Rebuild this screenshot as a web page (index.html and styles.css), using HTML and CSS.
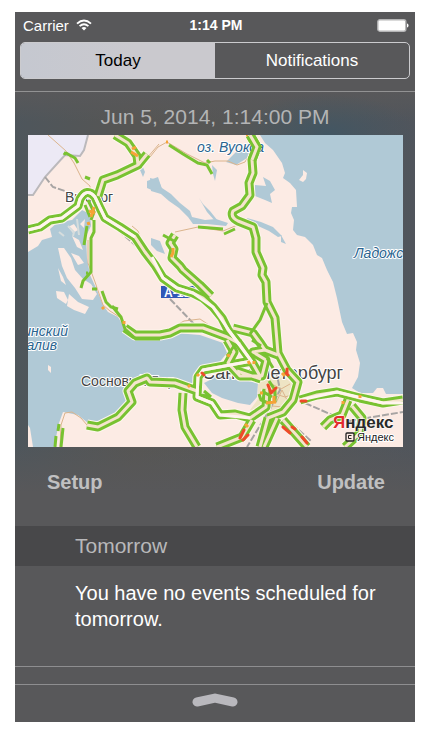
FILE: index.html
```html
<!DOCTYPE html>
<html lang="en">
<head>
<meta charset="utf-8">
<meta name="viewport" content="width=device-width, initial-scale=1">
<title>Notification Center</title>
<link rel="stylesheet" href="styles.css">
</head>
<body>
<main class="screen">
  <header class="status">
    <div class="carrier">
      <span>Carrier</span>
      <svg class="wifi" viewBox="0 0 16 12" aria-hidden="true">
        <path d="M1 4.6Q8-1.8 15 4.6M3.6 7.1Q8 3.2 12.4 7.1" fill="none" stroke="#fff" stroke-width="1.9"/>
        <path d="M5.5 9Q8 6.8 10.5 9L8 11.6Z" fill="#fff"/>
      </svg>
    </div>
    <time class="clock">1:14 PM</time>
    <svg class="battery" viewBox="0 0 32 13" aria-hidden="true">
      <rect x=".8" y=".8" width="28" height="11.4" rx="2" fill="#fff" stroke="#b5b5b6" stroke-width="1.4"/>
      <path d="M30 4.5q1.5 0 1.5 2t-1.5 2z" fill="#fff"/>
    </svg>
  </header>

  <nav class="tabs">
    <button class="tab tab-active" type="button">Today</button>
    <button class="tab" type="button">Notifications</button>
  </nav>

  <section class="widget">
    <h1 class="date">Jun 5, 2014, 1:14:00 PM</h1>
    <svg class="map" viewBox="28 135 375 312" role="img" aria-label="Traffic map">
      <rect x="28" y="135" width="375" height="312" fill="#fcebe4"/>
      <path d="M28 135H88L84 150L80 156L65 155L45 177L33 195H28Z" fill="#ece9f5"/>
      <path d="M88 135L84 150L80 156L65 155L45 177L33 195H28" class="border"/>

      <g class="water">
        <path d="M260 135L265 143L273 150L282 163L285 173L283 178L290 183L296 190L297 207L292 207L291 213L294 220L293 230L297 235L305 237L313 245L317 255L322 258L327 270L333 282L337 298L342 322L347 334L353 333L357 342L356 350L360 363L358 377L352 388L360 393H373L377 388H383L386 394H403V135Z"/>
        <path d="M28 252L38 246L42 240L52 237L50 229L58 222L72 220L82 210L90 214L91 226L86 236L87 258L90 275L97 290L103 305L108 312L118 317L124 327L128 337L163 339L176 333L200 335L223 343L227 353L218 364L202 370L196 377L193 384L183 385L160 381H140L134 386L133 397L125 415L103 425L88 423L78 415L63 412L59 423L54 447H33L30 428L28 425Z"/>
        <path d="M204 383L212 379L220 373L233 378L258 383L257 397L250 405L238 403L222 398L212 393Z"/>
        <path d="M150 178L158 180L162 188L171 194L180 203L190 211L192 217L205 220L216 219L228 223L226 226L207 224L193 224L188 217L179 208L169 201L161 194L151 191Z"/>
        <path d="M199 198L203 204L210 211L218 221L215 221L207 212Z"/>
        <path d="M255 185L266 186L263 177L270 181L275 190L270 194L272 203L265 200L255 196Z"/>
        <path d="M237 151L249 143L253 149L247 158L236 165L226 162Z"/>
        <path d="M247 218L261 222L273 227L282 236L278 237L269 231L258 226L249 223Z"/>
        <path d="M147 181L158 177L161 186L154 191L147 188Z"/>
        <path d="M142 165L145 172L143 177L140 170ZM212 165L217 170L215 181L213 174Z"/>
        <path d="M151 238L160 241L165 254L157 251L151 245ZM281 235L286 244L281 242Z"/>
      </g>
      <g class="land">
        <path d="M58 248L64 248L71 258L75 270L83 279L91 284L97 294L93 300L82 299L75 288L67 278L62 266Z"/>
        <path d="M58 268L63 277L66 285L61 281ZM56 291L64 292L68 300L66 304L57 298ZM69 294L78 302L89 307L85 314L74 310L67 306Z"/>
        <path d="M72 236L79 240L83 250L77 247ZM71 253L79 256L84 263L78 265ZM68 227L74 224L78 230L73 233ZM80 224L85 219L84 228Z"/>
        <path d="M48 365L51 367V373L48 370ZM299 180L303 175L303 170L307 173L306 179L303 182Z"/>
      </g>
      <path d="M68 226L74 232L73 236M59 232L64 236M77 219L79 235" fill="none" stroke="#d6dddd" stroke-width="2"/>
      <path d="M258 384L267 378L282 375L294 385L296 400L285 413L262 415L250 410L258 399Z" fill="#eee4c4"/>

      <g class="rail">
        <path d="M45 177L53 187L65 191L78 199M105 218L126 237L144 253M170 299L194 324M305 403L330 414L349 421L403 412M292 424L311 441M276 370L280 390L269 411L247 447"/>
      </g>
      <g class="street">
        <path d="M48 135L66 151L74 163L82 179L90 186V193M132 226L138 231L142 242"/>
        <path d="M150 157L158 147L167 142L187 154L205 163L215 161L228 161L237 165L245 162L253 148M137 165L147 158L159 144"/>
        <path d="M175 232L198 227L223 231L240 224M173 327L184 321L200 319L218 331"/>
        <path d="M60 447L61 425L65 413L72 412L81 418L87 425M88 240L88 263L95 282L103 305L110 311L121 318L125 330L135 337"/>
        <path d="M270 383L281 389L290 384M276 403L282 390L288 402M266 391L285 397L294 394M261 405L283 407"/>
      </g>

      <g class="label-dark">
        <text x="65" y="202" font-size="14">Выборг</text>
        <text x="81" y="386" font-size="14">Сосновый Бор</text>
        <text x="202" y="379" font-size="18">Санкт-Петербург</text>
      </g>
      <rect x="161" y="286" width="37" height="12" fill="#3157b7"/>
      <text x="164" y="297" class="route-no">A-181</text>

      <g class="halo">
        <g id="roads">
          <path d="M28 230L40 227L50 220L62 218L78 206L80 199Q87 187 95 197L100 208L105 218L120 227L135 237L145 252L155 265L163 278L177 288L193 293L203 298L213 307L222 318L228 330L240 345L252 362L260 376"/>
          <path d="M98 196L103 180L117 175L138 165L137 156L128 143L115 135M138 165L147 154"/>
          <path d="M250 135L257 147L252 160L253 173L249 183L250 195L242 206L233 211Q230 217 238 221L253 227L256 238L256 252L263 268L262 275L266 282L267 302L275 318L278 353L287 370L298 382L293 400L283 412L268 418"/>
          <path d="M125 328L135 335L160 335L170 333L180 328L203 328L227 337L240 344M233 328L253 333L261 344L265 350"/>
          <path d="M175 235L170 243L174 249L172 258L180 266L183 270L200 285L211 296"/>
          <path d="M252 361L230 365L203 370L198 377L197 397L212 403L220 415L235 414L250 418L266 407L267 389M197 391L175 383L150 382L147 378L135 383L128 391L132 402L118 417L98 427L87 425"/>
          <path d="M227 340L234 352L228 363L240 376L262 376L266 360L253 352L265 350L278 355M237 371L261 379"/>
          <path d="M183 393L182 410L185 427L197 447M252 420L242 437L217 447M268 418L260 447M277 418L264 447M283 420L307 447"/>
          <path d="M300 400L317 395L337 392L360 398L383 403L403 400M348 400L342 415L330 420L323 427M352 406L362 418L360 433L345 447"/>
        </g>
      </g>
      <use href="#roads" class="traffic"/>
      <use href="#roads" class="median"/>
      <path d="M152 257L163 278L177 288L193 293L213 307L230 332L252 362M28 230L40 227L50 220L62 218L78 206L80 199Q87 187 95 197L105 218L135 237M252 361L203 370L198 377L197 397L212 403L220 415L250 418M300 400L337 392L383 403H403" class="main-line"/>
      <g class="single">
        <path d="M88 200L94 212L91 220M85 205L90 217M94 220V232L91 238L91 272L83 281L81 288M87 226L84 245M86 273H88M92 289H97M102 291L106 302L111 307L118 309M66 153L75 158L78 163M85 177L90 179M64 155L66 152"/>
        <path d="M169 145L183 154L198 163L207 165L212 174M207 160L210 163M198 227L223 229M224 234L235 229M163 235L174 241M267 303L260 320L250 334"/>
        <path d="M59 424L58 431M56 436L55 447M63 428L61 447M112 306L121 317L125 329L136 339L160 339"/>
        <path d="M204 391L211 397M202 395L209 397M227 356L234 346M252 340L261 346M267 358L273 368M269 381L275 390V402M259 394L261 400L268 403M262 391L272 397"/>
      </g>
      <g class="slow">
        <path d="M131 152L138 156M132 149L136 147M89 211L95 213M91 217L94 207M88 222L89 225M173 248V253L171 257M166 142H168M246 135H248M102 307L104 309M124 321V324M228 354L229 357M248 361L250 364M254 361V364M266 403L276 402M260 393H263M188 385L190 387M197 374L199 376M343 401V404M360 395V398M245 424L248 427M274 396V401M282 373L285 376"/>
      </g>
      <g class="jam">
        <path d="M202 373L204 375M268 385L271 393M272 392L276 388M240 438L244 430M243 440L248 435M283 427L290 433M302 437L307 443M287 369V373M286 373L288 375M301 401H306M292 427L295 429"/>
      </g>

      <g class="label-water">
        <text x="197" y="152">оз. Вуокса</text>
        <text x="354" y="258">Ладожское</text>
        <text x="68" y="336" text-anchor="end">Финский</text>
        <text x="57" y="350" text-anchor="end">залив</text>
      </g>
      <path d="M250 135L257 147L252 160" class="overpass-green"/>
      <path d="M250 135L257 147L252 160" class="overpass-core"/>
      <text x="333" y="428" class="brand"><tspan fill="#e32b2e">Я</tspan>ндекс</text>
      <g class="copyright">
        <rect x="346" y="433" width="8" height="8" rx="1" fill="#fcebe4" stroke="#222" stroke-width="1.3"/>
        <path d="M351.5 435.5h-3v3h3" fill="none" stroke="#222"/>
        <text x="357" y="441">Яндекс</text>
      </g>
    </svg>
    <div class="actions">
      <button class="action" type="button">Setup</button>
      <button class="action" type="button">Update</button>
    </div>
  </section>

  <section class="agenda">
    <h2 class="agenda-title">Tomorrow</h2>
    <p class="agenda-text">You have no events scheduled for tomorrow.</p>
  </section>

  <footer class="footer">
    <button class="grabber" type="button" aria-label="Close">
      <svg viewBox="0 0 46 14" aria-hidden="true"><path d="M5 9L23 5L41 9" fill="none" stroke="#b9b8bd" stroke-width="9" stroke-linecap="round" stroke-linejoin="miter"/></svg>
    </button>
  </footer>
</main>
</body>
</html>
```
FILE: styles.css
```css
* { box-sizing: border-box; }

body {
  margin: 0;
  padding: 12px 11px 12px 15px;
  background: #fff;
  font-family: "Liberation Sans", Arial, sans-serif;
}

button {
  margin: 0;
  padding: 0;
  border: 0;
  background: none;
  font: inherit;
  color: inherit;
}

.screen {
  background: #58585a;
  color: #fff;
}

.status {
  display: grid;
  grid-template-columns: 1fr auto 1fr;
  align-items: center;
  height: 30px;
  padding: 0 6px 4px 8px;
  font-size: 15px;
}

.carrier {
  display: flex;
  align-items: center;
  gap: 7px;
}

.wifi { width: 16px; height: 12px; }

.clock {
  font-size: 14px;
  font-weight: 700;
}

.battery {
  justify-self: end;
  width: 32px;
  height: 13px;
}

.tabs {
  display: grid;
  grid-template-columns: 1fr 1fr;
  height: 37px;
  margin: 0 5px;
  border: 1px solid #cbcbce;
  border-radius: 5px;
  overflow: hidden;
  font-size: 17px;
}

.tab-active {
  background: linear-gradient(90deg, #c5c8d0, #cac9ce 60%);
  color: #000;
}

.widget {
  margin-top: 12px;
  border-top: 1px solid #929293;
  background:
    radial-gradient(ellipse 90px 40px at 78% 42px, #425663, transparent),
    linear-gradient(#58585a, transparent 30px, transparent 350px, #58585a 400px),
    linear-gradient(90deg, #4e565c, #575654 30%, #565757 60%, #50555c);
}

.date {
  margin: 0;
  padding: 9px 0 3px;
  font-size: 21px;
  line-height: 31px;
  font-weight: 400;
  text-align: center;
  color: #b3b4b5;
}

.map {
  display: block;
  width: calc(100% - 25px);
  margin: 0 12px 0 13px;
  overflow: hidden;
}

.actions {
  display: flex;
  justify-content: space-between;
  padding: 22px 30px 31px 32px;
}

.action {
  font-size: 20px;
  line-height: 26px;
  font-weight: 700;
  color: #c0c0c1;
}

.agenda { border-bottom: 1px solid #8e8e90; }

.agenda-title {
  margin: 0;
  padding: 0 60px;
  background: #48484a;
  font-size: 21px;
  line-height: 40px;
  font-weight: 400;
  color: #b8b8ba;
}

.agenda-text {
  margin: 0;
  padding: 14px 20px 34px 60px;
  font-size: 20px;
  line-height: 26px;
}

.footer {
  display: flex;
  justify-content: center;
  margin-top: 17px;
  padding: 8px 0 15px;
  border-top: 1px solid #8e8e90;
}

.grabber {
  width: 46px;
  height: 14px;
}

.grabber svg { display: block; }

/* Map */
.border { fill: none; stroke: #bbb9bc; stroke-width: 2; }
.water { fill: #b0c9d6; }
.land { fill: #fcebe4; }
.rail path { fill: none; stroke: #a7a4a3; stroke-width: 2; stroke-dasharray: 7 2; }
.street path { fill: none; stroke: #dbb48c; stroke-width: 1; }

#roads path {
  fill: none;
  stroke-linejoin: round;
}

.halo { stroke: #fdf6ec; stroke-width: 11px; }
.traffic { stroke: #78c231; stroke-width: 9px; }
.median { stroke: #f5e4cd; stroke-width: 3px; }

.main-line {
  fill: none;
  stroke: #fff5ee;
  stroke-width: 3;
  stroke-linejoin: round;
}

.single path { fill: none; stroke: #78c231; stroke-width: 3; }
.slow path { fill: none; stroke: #f6a336; stroke-width: 3; }
.jam path { fill: none; stroke: #ee4b28; stroke-width: 3; stroke-linecap: round; }
.overpass-green { fill: none; stroke: #78c231; stroke-width: 9; }
.overpass-core { fill: none; stroke: #f5e4cd; stroke-width: 3; }

.map text {
  paint-order: stroke;
  stroke: #fff;
  stroke-width: 2px;
  stroke-linejoin: round;
}

.label-dark { fill: #444; }
.label-water { fill: #2b648f; font-size: 14px; font-style: italic; }
.map .route-no { fill: #fff; stroke: none; font-size: 12px; font-weight: 700; }
.map .brand {
  fill: #292929;
  stroke-width: 1px;
  font-size: 17px;
  font-weight: 700;
}
.copyright text { fill: #222; font-size: 11px; }
```
